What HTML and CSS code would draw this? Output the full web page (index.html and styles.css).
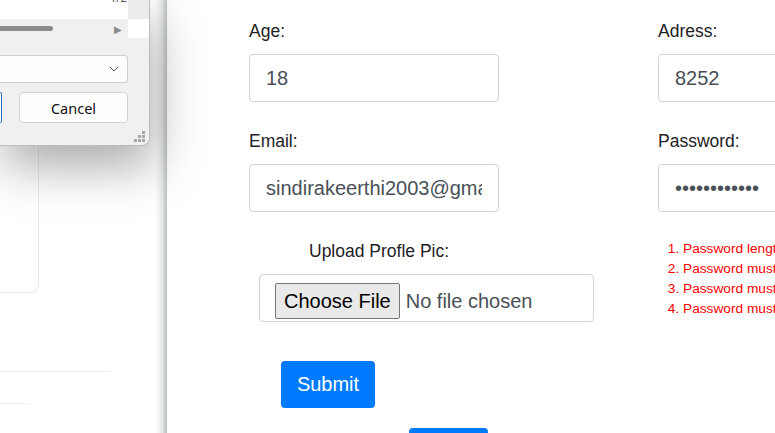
FILE: index.html
```html
<!DOCTYPE html>
<html>
<head>
<meta charset="utf-8">
<link rel="stylesheet" href="styles.css">
</head>
<body>
<div class="left">
  <div class="left-page">
    <div class="card"></div>
    <div class="line line-long"></div>
    <div class="line line-short"></div>
  </div>
  <div class="edge"></div>
  <div class="dialog">
    <div class="dlg-top">
      <div class="dlg-list"><span class="frag">1/2</span></div>
      <div class="dlg-corner"></div>
    </div>
    <div class="dlg-scroll">
      <div class="hbar"><span class="thumb"></span><span class="arrow">&#9654;</span></div>
      <div class="dlg-corner white"></div>
    </div>
    <div class="dlg-select">
      <svg class="chev" width="10" height="6" viewBox="0 0 10 6"><path d="M1 1l4 4 4-4" fill="none" stroke="#5a5a5a" stroke-width="1"/></svg>
    </div>
    <div class="dlg-buttons">
      <span class="dlg-ok"></span>
      <span class="dlg-cancel">Cancel</span>
    </div>
    <svg class="grip" width="12" height="12" viewBox="0 0 12 12" fill="#a8a8a8">
      <rect x="8" y="0" width="3" height="3"/>
      <rect x="4" y="4" width="3" height="3"/><rect x="8" y="4" width="3" height="3"/>
      <rect x="0" y="8" width="3" height="3"/><rect x="4" y="8" width="3" height="3"/><rect x="8" y="8" width="3" height="3"/>
    </svg>
  </div>
</div>
<div class="main">
  <div class="grid">
    <div class="col">
      <div class="group">
        <label class="lbl">Age:</label>
        <input class="field" type="text" value="18">
      </div>
      <div class="group">
        <label class="lbl">Email:</label>
        <input class="field" type="text" value="sindirakeerthi2003@gmail.com">
      </div>
      <div class="upload">
        <label class="lbl upload-lbl">Upload Profle Pic:</label>
        <div class="filebox">
          <span class="filebtn">Choose File</span>
          <span class="filetxt">No file chosen</span>
        </div>
      </div>
      <button class="btn submit">Submit</button>
      <button class="btn second">Login</button>
    </div>
    <div class="col">
      <div class="group">
        <label class="lbl">Adress:</label>
        <input class="field wide" type="text" value="8252">
      </div>
      <div class="group">
        <label class="lbl">Password:</label>
        <input class="field wide" type="password" value="abcdefghijkl">
      </div>
      <ol class="rules">
        <li>Password length must be at least 8 characters</li>
        <li>Password must contain an uppercase letter</li>
        <li>Password must contain a number</li>
        <li>Password must contain a special character</li>
      </ol>
    </div>
  </div>
</div>
</body>
</html>
```

FILE: styles.css
```css
* { box-sizing: border-box; }
html, body { margin: 0; padding: 0; }
body {
  width: 775px;
  height: 433px;
  overflow: hidden;
  display: flex;
  background: #fff;
  font-family: "Liberation Sans", Arial, sans-serif;
}
.left {
  position: relative;
  width: 167px;
  flex: none;
  display: flex;
  height: 433px;
}
.left-page {
  flex: 1;
  background: #fff;
}
.card {
  width: 39px;
  height: 293px;
  border: 1px solid #ececec;
  border-left: none;
  border-top: none;
  border-radius: 0 0 8px 0;
}
.line {
  height: 1px;
  background: #eeeeee;
}
.line-long { width: 111px; margin-top: 78px; }
.line-short { width: 29px; margin-top: 31px; }
.edge {
  width: 12px;
  flex: none;
  background: linear-gradient(to right, #ffffff 0, #f3f4f4 4px, #e0e3e3 8px, #c9cdcd 10px, #bcc1c1 12px);
}
.dialog {
  position: absolute;
  left: 0;
  top: 0;
  width: 150px;
  height: 146px;
  background: #f0f0f0;
  border-right: 1px solid #bdbdbd;
  border-bottom: 1px solid #bdbdbd;
  border-radius: 0 0 8px 0;
  box-shadow: 4px 20px 50px rgba(0, 0, 0, 0.34);
  font-family: "Noto Sans", "Open Sans", sans-serif;
}
.dlg-top, .dlg-scroll { display: flex; height: 19px; }
.dlg-list { width: 128px; background: #fff; position: relative; overflow: hidden; }
.frag { position: absolute; left: 110px; top: -10px; font-size: 11px; color: #555; }
.dlg-corner { width: 21px; background: #ececec; }
.dlg-corner.white { background: #fff; }
.hbar {
  width: 128px;
  background: #f0f0f0;
  display: flex;
  align-items: center;
  justify-content: space-between;
  padding-right: 6px;
}
.thumb {
  width: 53px;
  height: 5px;
  background: #8a8a8a;
  border-radius: 0 3px 3px 0;
}
.arrow { font-size: 10px; color: #8a8a8a; }
.dlg-select {
  margin-top: 17px;
  width: 128px;
  height: 28px;
  background: #fdfdfd;
  border: 1px solid #cfcfcf;
  border-left: none;
  border-radius: 0 4px 4px 0;
  display: flex;
  align-items: center;
  justify-content: flex-end;
  padding-right: 8px;
}
.dlg-buttons {
  margin-top: 9px;
  display: flex;
  height: 31px;
}
.dlg-ok {
  width: 2px;
  border: 1px solid #2a6fbf;
  border-left: none;
  border-radius: 0 3px 3px 0;
  background: #fdfdfd;
}
.dlg-cancel {
  margin-left: 17px;
  width: 109px;
  background: #fdfdfd;
  border: 1px solid #d3d3d3;
  border-radius: 4px;
  display: flex;
  align-items: center;
  justify-content: center;
  font-size: 14.5px;
  color: #111;
}
.grip { position: absolute; right: 3px; bottom: 2px; }

.main {
  flex: 1;
  padding: 19px 0 0 82px;
  overflow: hidden;
  min-width: 0;
}
.grid {
  display: grid;
  grid-template-columns: 409px 409px;
}
.col { display: flex; flex-direction: column; align-items: flex-start; }
.group { display: flex; flex-direction: column; margin-bottom: 27px; }
.lbl {
  font-size: 17.5px;
  line-height: 24px;
  color: #1e2125;
  margin-bottom: 11px;
}
.field {
  width: 250px;
  height: 48px;
  border: 1px solid #ced4da;
  border-radius: 4px;
  padding: 0 16px;
  font-family: "Liberation Sans", Arial, sans-serif;
  font-size: 20px;
  color: #495057;
  background: #fff;
  outline: none;
}
.field.wide { width: 250px; }
.upload { display: flex; flex-direction: column; align-items: flex-start; }
.upload-lbl { margin-left: 60px; margin-bottom: 11px; }
.filebox {
  margin-left: 10px;
  width: 335px;
  height: 48px;
  border: 1px solid #ced4da;
  border-radius: 4px;
  padding: 8px 0 0 15px;
  display: flex;
  align-items: flex-start;
  font-size: 20px;
}
.filebtn {
  height: 36px;
  padding: 0 8px;
  background: #e9e9e9;
  border: 1px solid #767676;
  border-radius: 2px;
  color: #000;
  line-height: 34px;
}
.filetxt {
  margin-left: 6px;
  line-height: 36px;
  color: #495057;
}
.btn {
  border: none;
  background: #007bff;
  color: #fff;
  border-radius: 4px;
  font-family: "Liberation Sans", Arial, sans-serif;
  font-size: 20px;
  padding: 0;
}
.submit {
  margin-top: 39px;
  margin-left: 32px;
  width: 94px;
  height: 47px;
}
.second {
  margin-top: 20px;
  margin-left: 160px;
  width: 79px;
  height: 47px;
}
.rules {
  margin: 0;
  padding-left: 25px;
  font-size: 13.7px;
  line-height: 20px;
  color: #ff0000;
  white-space: nowrap;
}
```
